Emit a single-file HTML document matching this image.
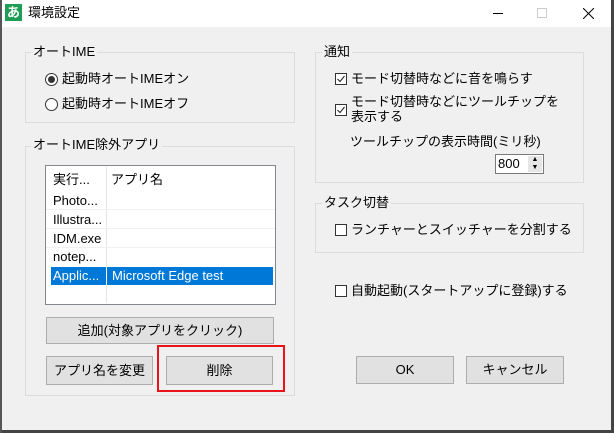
<!DOCTYPE html>
<html><head><meta charset="utf-8"><style>
*{box-sizing:border-box;margin:0;padding:0}
body{width:614px;height:433px;overflow:hidden;background:#f0f0f0;font-family:"Liberation Sans","Noto Sans CJK JP",sans-serif;font-size:13px;color:#000;position:relative}
.a{position:absolute;white-space:nowrap;line-height:16px}
.title{position:absolute;left:0;top:0;width:614px;height:27px;background:#fff}
.grp{position:absolute;border:1px solid #dcdcdc}
.lbl{position:absolute;background:#f0f0f0;padding:0 2px;line-height:16px}
.btn{position:absolute;background:#e1e1e1;border:1px solid #adadad;text-align:center;line-height:26px}
.cb{position:absolute;width:12px;height:12px;border:1px solid #333;background:#fff}
.rb{position:absolute;width:13px;height:13px;border:1px solid #333;border-radius:50%;background:#fff}
</style></head><body>
<div class="title"></div>
<div style="position:absolute;left:5px;top:4px;width:17px;height:17px;background:#1e9e55;color:#fff;font-size:13px;line-height:17px;text-align:center;font-weight:bold">あ</div>
<div class="a" style="left:28px;top:5px">環境設定</div>
<div style="position:absolute;left:493px;top:13px;width:10px;height:1px;background:#000"></div>
<div style="position:absolute;left:537px;top:8px;width:10px;height:10px;border:1px solid #ccc"></div>
<svg style="position:absolute;left:583px;top:8px" width="11" height="11"><path d="M0 0L11 11M11 0L0 11" stroke="#000" stroke-width="1"/></svg>
<div style="position:absolute;right:0;top:0;width:3px;height:433px;background:#444"></div>
<div style="position:absolute;left:0;bottom:0;width:614px;height:3px;background:#444"></div>
<div style="position:absolute;left:0;top:0;width:2px;height:433px;background:#555"></div>

<div class="grp" style="left:25px;top:52px;width:270px;height:71px"></div>
<div class="lbl" style="left:31px;top:44px">オートIME</div>
<div class="rb" style="left:45px;top:73px"><div style="margin:2px;width:7px;height:7px;border-radius:50%;background:#333"></div></div>
<div class="a" style="left:62px;top:71px">起動時オートIMEオン</div>
<div class="rb" style="left:45px;top:98px"></div>
<div class="a" style="left:62px;top:96px">起動時オートIMEオフ</div>

<div class="grp" style="left:25px;top:146px;width:270px;height:250px"></div>
<div class="lbl" style="left:31px;top:137px">オートIME除外アプリ</div>
<div style="position:absolute;left:45px;top:165px;width:231px;height:140px;border:1px solid #828790;background:#fff"></div>
<div style="position:absolute;left:106px;top:167px;width:1px;height:136px;background:#e5e5e5"></div>
<div style="position:absolute;left:46px;top:209px;width:229px;height:1px;background:#f0f0f0"></div>
<div style="position:absolute;left:46px;top:228px;width:229px;height:1px;background:#f0f0f0"></div>
<div style="position:absolute;left:46px;top:247px;width:229px;height:1px;background:#f0f0f0"></div>
<div class="a" style="left:53px;top:172px">実行...</div>
<div class="a" style="left:111px;top:172px">アプリ名</div>
<div class="a" style="left:53px;top:193px">Photo...</div>
<div class="a" style="left:53px;top:212px">Illustra...</div>
<div class="a" style="left:53px;top:231px">IDM.exe</div>
<div class="a" style="left:53px;top:249px">notep...</div>
<div style="position:absolute;left:51px;top:267px;width:222px;height:18px;background:#0078d7"></div>
<div style="position:absolute;left:106px;top:267px;width:1px;height:18px;background:#fff"></div>
<div class="a" style="left:53px;top:268px;color:#fff">Applic...</div>
<div class="a" style="left:112px;top:268px;color:#fff">Microsoft Edge test</div>

<div class="btn" style="left:46px;top:317px;width:228px;height:27px">追加(対象アプリをクリック)</div>
<div class="btn" style="left:46px;top:356px;width:107px;height:29px;line-height:27px">アプリ名を変更</div>
<div style="position:absolute;left:157px;top:345px;width:128px;height:47px;border:2px solid #e8141a"></div>
<div class="btn" style="left:166px;top:356px;width:107px;height:29px;line-height:27px">削除</div>

<div class="grp" style="left:315px;top:52px;width:269px;height:131px"></div>
<div class="lbl" style="left:322px;top:44px">通知</div>
<div class="cb" style="left:335px;top:73px"><svg width="10" height="10" style="position:absolute;left:0;top:0"><path d="M1.5 5L4 7.5L8.5 2" stroke="#333" fill="none" stroke-width="1.2"/></svg></div>
<div class="a" style="left:351px;top:71px">モード切替時などに音を鳴らす</div>
<div class="cb" style="left:335px;top:104px"><svg width="10" height="10" style="position:absolute;left:0;top:0"><path d="M1.5 5L4 7.5L8.5 2" stroke="#333" fill="none" stroke-width="1.2"/></svg></div>
<div class="a" style="left:351px;top:94px">モード切替時などにツールチップを</div>
<div class="a" style="left:351px;top:109px">表示する</div>
<div class="a" style="left:350px;top:134px">ツールチップの表示時間(ミリ秒)</div>
<div style="position:absolute;left:495px;top:154px;width:49px;height:20px;border:1px solid #7a7a7a;background:#fff"></div>
<div class="a" style="left:498px;top:156px">800</div>
<div style="position:absolute;left:528px;top:156px;width:14px;height:16px;background:#e6e6e6;font-size:7px;line-height:8px;text-align:center">▲<br>▼</div>

<div class="grp" style="left:315px;top:203px;width:269px;height:50px"></div>
<div class="lbl" style="left:322px;top:195px">タスク切替</div>
<div class="cb" style="left:335px;top:224px"></div>
<div class="a" style="left:351px;top:222px">ランチャーとスイッチャーを分割する</div>

<div class="cb" style="left:335px;top:285px"></div>
<div class="a" style="left:351px;top:283px">自動起動(スタートアップに登録)する</div>

<div class="btn" style="left:356px;top:356px;width:98px;height:28px">OK</div>
<div class="btn" style="left:466px;top:356px;width:98px;height:28px">キャンセル</div>
</body></html>
